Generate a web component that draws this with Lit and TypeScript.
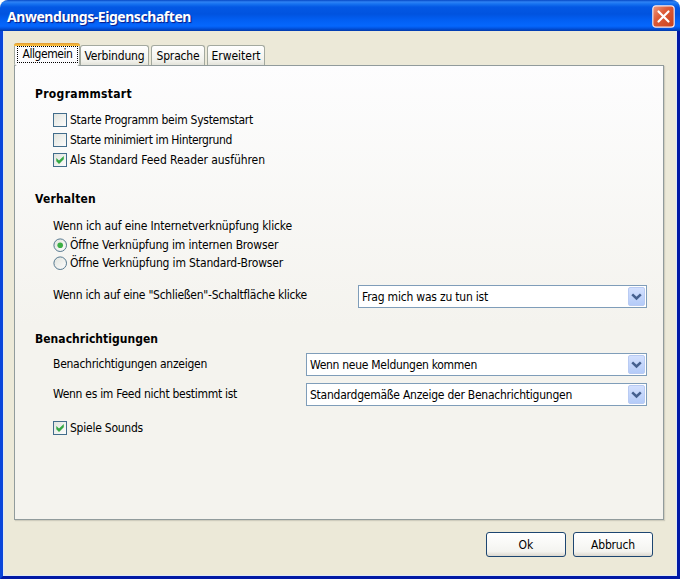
import { LitElement, html, css, svg, nothing } from "lit";
import { customElement, property } from "lit/decorators.js";

/** Text run whose letter spacing is tuned so it spans a given width. */
@customElement("fit-label")
class FitLabel extends LitElement {
  @property() text = "";
  @property({ type: Number }) w = 0;
  static styles = css`
    :host { display: inline-block; white-space: pre; flex: none; }
    .run { display: inline-block; white-space: pre; }
  `;
  render() { return html`<span class="run">${this.text}</span>`; }
  updated() {
    const run = this.renderRoot.querySelector(".run") as HTMLElement;
    run.style.letterSpacing = "0px";
    const natural = run.getBoundingClientRect().width;
    run.style.letterSpacing = `${(this.w - natural) / this.text.length}px`;
  }
}

@customElement("xp-option")
class XpOption extends LitElement {
  @property() kind = "check";
  @property() text = "";
  @property({ type: Number }) w = 0;
  @property({ type: Boolean }) on = false;
  static styles = css`
    :host { display: flex; align-items: center; gap: 2px; height: 100%; }
    svg { flex: none; display: block; }
  `;
  render() {
    return html`<svg width="15" height="15" viewBox="0 0 15 15">
        <defs><linearGradient id="g" x1="0" y1="0" x2="1" y2="1">
          <stop offset="0" stop-color="#e0e3dd"></stop><stop offset="1" stop-color="#fdfdfd"></stop>
        </linearGradient></defs>
        ${this.kind === "check"
          ? svg`<rect x="0.5" y="0.5" width="13" height="13" fill="url(#g)" stroke="#426d8c"/>
              ${this.on ? svg`<path d="M3.3 5 L6 7.6 L10.8 3.1 V6.2 L6 11 L3.3 8.3 Z" fill="#35a845"/>` : nothing}`
          : svg`<circle cx="7.2" cy="7.2" r="6.3" fill="url(#g)" stroke="#55788f"/>
              ${this.on ? svg`<circle cx="7.2" cy="7.2" r="2.8" fill="#3cae45"/>` : nothing}`}
      </svg><fit-label .text=${this.text} .w=${this.w}></fit-label>`;
  }
}

@customElement("xp-select")
class XpSelect extends LitElement {
  @property() text = "";
  @property({ type: Number }) w = 0;
  static styles = css`
    :host { display: flex; align-items: center; justify-content: space-between; box-sizing: border-box;
      height: 23px; border: 1px solid #7f9db9; background: #fff; padding: 1px 1px 1px 3px; }
    .drop { width: 17px; height: 19px; display: flex; align-items: center; justify-content: center; box-sizing: border-box;
      background: linear-gradient(#d3e0fe, #b4cbf8); border: 1px solid #b9cbf3; border-radius: 2px; }
  `;
  render() {
    return html`<fit-label .text=${this.text} .w=${this.w}></fit-label>
      <span class="drop"><svg width="11" height="8" viewBox="0 0 11 8">
        <path d="M1.2 1.3 L5.5 5.5 L9.8 1.3" fill="none" stroke="#45608f" stroke-width="2.5"/></svg></span>`;
  }
}

@customElement("app-root")
class AppRoot extends LitElement {
  static styles = css`
    :host { display: block; width: 680px; height: 579px; overflow: hidden; background: #fff; color: #000;
      font: 12px/16px "DejaVu Sans Condensed", "DejaVu Sans", sans-serif; font-stretch: condensed; }
    .window { display: flex; flex-direction: column; box-sizing: border-box; height: 579px; overflow: hidden;
      border-radius: 8px 8px 0 0; background: #ece9d8; }
    .title { flex: none; height: 31px; box-sizing: border-box; display: flex; align-items: center; justify-content: space-between;
      padding: 2px 5px 0 7px; color: #fff; font: bold 14px/20px "Noto Sans", sans-serif; text-shadow: 1px 1px 1px #0a1883;
      background: linear-gradient(#0648c4 0, #2e83f5 2px, #1672f0 4px, #0358e4 7px, #0153df 14px, #025ff3 20px, #0567fd 26px, #0257e6 28px, #0138ab 31px); }
    .close { display: block; }
    .body { flex: 1; display: flex; flex-direction: column; box-sizing: border-box; border: solid #0831d9;
      border-color: #0a3bd2 #0119a5 #0119a5 #0a46da; border-width: 0 3px 3px 3px; padding: 12px 13px 0 11px;
      box-shadow: inset 1px -1px 0 #dfe9f5, inset -1px 0 0 #dfe9f5; }
    .tabs { flex: none; display: flex; align-items: flex-end; height: 22px; }
    .tab { box-sizing: border-box; height: 20px; display: flex; justify-content: center; padding-top: 2px;
      border: 1px solid #a3a99f; border-bottom: 0; border-radius: 3px 3px 0 0; background: linear-gradient(#fff, #f0f0ea 80%, #e3e3da); }
    .t1 { width: 66px; height: 23px; margin-bottom: -1px; padding: 0; border-top: 0; background: #fcfcfe; flex-direction: column;
      justify-content: flex-start; position: relative; border-radius: 3px; }
    .bar { height: 3px; margin: 0 -1px; border-radius: 3px 3px 0 0; background: linear-gradient(#e09a36, #ffc73c); }
    .focus { height: 17px; margin: 0 1px 0 2px; box-sizing: border-box; border: 1px dotted #000; display: flex; justify-content: center; line-height: 14px; }
    .t2 { width: 69px; } .t3 { width: 54px; margin-left: 2px; } .t4 { width: 58px; margin-left: 2px; }
    .panel { flex: none; box-sizing: border-box; width: 650px; height: 455px; border: 1px solid #919b9c; padding: 19px 16px 0 20px;
      box-shadow: 1px 1px 1px #cfcdbe; background: linear-gradient(#fdfdfe, #f4f3ee 57%, #f4f3ee); }
    .head { display: flex; align-items: center; height: 18px; font-weight: bold; }
    .group { padding-left: 18px; display: flex; flex-direction: column; }
    .row { height: 20px; display: flex; align-items: center; }
    .g1 { margin-top: 7px; height: 80px; }
    .g2 { margin-top: 8px; height: 114px; }
    .g3 { margin-top: 5px; }
    .radio { height: 18px; }
    .pair { height: 23px; display: flex; align-items: center; justify-content: space-between; }
    .pair > fit-label { margin-top: -2px; }
    .gap13 { margin-top: 13px; } .gap13 > fit-label { margin-top: -4px; }
    .gap7 { margin-top: 7px; } .sound { margin-top: 12px; }
    .s1 { width: 289px; } .s2 { width: 341px; }
    .actions { flex: none; display: flex; justify-content: flex-end; gap: 7px; padding: 12px 11px 0 0; }
    .btn { box-sizing: border-box; width: 80px; height: 25px; display: flex; align-items: center; justify-content: center;
      border: 1px solid #1d4671; border-radius: 3px; background: linear-gradient(#fff, #f4f4f0 80%, #dcd8cf); }
  `;
  render() {
    const t = (text: string, w: number) => html`<fit-label .text=${text} .w=${w}></fit-label>`;
    const opt = (kind: string, text: string, w: number, on = false) =>
      html`<div class="row ${kind}"><xp-option .kind=${kind} .text=${text} .w=${w} .on=${on}></xp-option></div>`;
    const sel = (cls: string, text: string, w: number) => html`<xp-select class=${cls} .text=${text} .w=${w}></xp-select>`;
    return html`<div class="window">
      <div class="title">${t("Anwendungs-Eigenschaften", 184)}
        <svg class="close" width="23" height="23" viewBox="0 0 23 23">
          <defs><linearGradient id="r" x1="0" y1="0" x2="1" y2="1">
            <stop offset="0" stop-color="#ee9c83"></stop><stop offset=".4" stop-color="#dd5b38"></stop><stop offset="1" stop-color="#c7401b"></stop>
          </linearGradient></defs>
          <rect x="0.8" y="0.8" width="21.4" height="21.4" rx="3" fill="url(#r)" stroke="#f2e6ee" stroke-width="1.2"/>
          <path d="M6.5 6.5 L16.5 16.5 M16.5 6.5 L6.5 16.5" stroke="#fff" stroke-width="2.2" stroke-linecap="round"/>
        </svg>
      </div>
      <div class="body">
        <div class="tabs">
          <div class="tab t1"><div class="bar"></div><div class="focus">${t("Allgemein", 50)}</div></div>
          <div class="tab t2">${t("Verbindung", 60)}</div>
          <div class="tab t3">${t("Sprache", 43)}</div>
          <div class="tab t4">${t("Erweitert", 49)}</div>
        </div>
        <div class="panel">
          <div class="head">${t("Programmstart", 97)}</div>
          <div class="group g1">
            ${opt("check", "Starte Programm beim Systemstart", 183)}
            ${opt("check", "Starte minimiert im Hintergrund", 162)}
            ${opt("check", "Als Standard Feed Reader ausführen", 195, true)}
          </div>
          <div class="head">${t("Verhalten", 61)}</div>
          <div class="group g2">
            <div class="row">${t("Wenn ich auf eine Internetverknüpfung klicke", 239)}</div>
            ${opt("radio", "Öffne Verknüpfung im internen Browser", 208, true)}
            ${opt("radio", "Öffne Verknüpfung im Standard-Browser", 213)}
            <div class="pair gap13">${t('Wenn ich auf eine "Schließen"-Schaltfläche klicke', 254)}${sel("s1", "Frag mich was zu tun ist", 126)}</div>
          </div>
          <div class="head">${t("Benachrichtigungen", 123)}</div>
          <div class="group g3">
            <div class="pair">${t("Benachrichtigungen anzeigen", 154)}${sel("s2", "Wenn neue Meldungen kommen", 167)}</div>
            <div class="pair gap7">${t("Wenn es im Feed nicht bestimmt ist", 184)}${sel("s2", "Standardgemäße Anzeige der Benachrichtigungen", 262)}</div>
            <div class="sound">${opt("check", "Spiele Sounds", 73, true)}</div>
          </div>
        </div>
        <div class="actions"><div class="btn">${t("Ok", 15)}</div><div class="btn">${t("Abbruch", 44)}</div></div>
      </div>
    </div>`;
  }
}
